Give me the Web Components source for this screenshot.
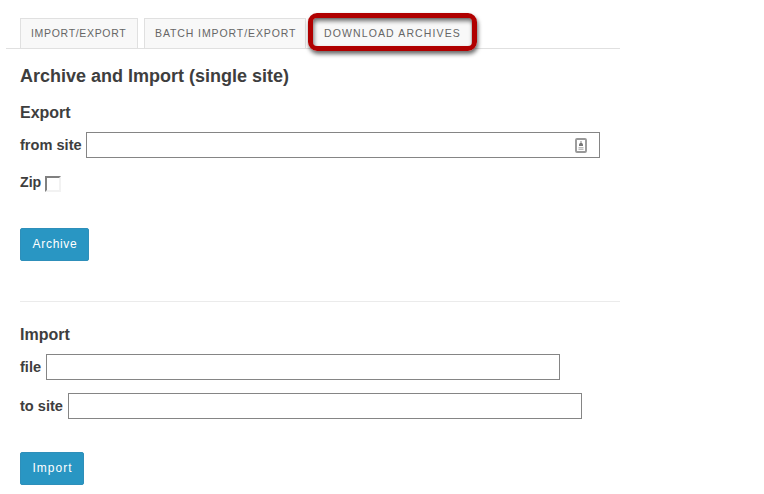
<!DOCTYPE html>
<html lang="en"><head><meta charset="utf-8"><title>Archive Tool</title>
<style>html,body{margin:0;background:#fff}body{font-family:"Liberation Sans",Arial,sans-serif;color:#3e3e3e;width:764px;height:494px;overflow:hidden}</style></head>
<body><archive-page></archive-page>
<script>
function define(name, html) {
  const template = document.createElement('template');
  template.innerHTML = html;
  customElements.define(name, class extends HTMLElement {
    constructor() {
      super();
      this.attachShadow({mode: 'open'}).append(template.content.cloneNode(true));
    }
  });
}
define('nav-tab', `<style>
:host{display:block;position:relative;box-sizing:border-box;height:30px;border:1px solid #e0e0e0;border-bottom:0;background:#f8f8f8;padding-left:10px;font-size:10.5px;line-height:29px;letter-spacing:var(--track);color:#666;white-space:nowrap}
.ring{display:none}
:host([highlighted]) .ring{display:block;position:absolute;left:-5px;top:-6px;width:169px;height:38px;box-sizing:border-box;border:5px solid #b00000;border-radius:9px;box-shadow:1px 3px 4px rgba(0,0,0,.6),inset 1px 3px 4px rgba(0,0,0,.55)}
</style><slot></slot><span class="ring"></span>`);
define('tab-bar', `<style>:host{display:flex;box-sizing:border-box;gap:6px;height:49px;width:614px;margin-left:6px;padding:18px 0 0 14px;border-bottom:1px solid #e0e0e0}</style><slot></slot>`);
define('form-field', `<style>
:host{display:flex;align-items:center;gap:4px;height:26px;font-size:14.6px;font-weight:bold}
label{width:var(--label);white-space:nowrap}
.box{box-sizing:border-box;width:514px;height:26px;border:1px solid #858585;display:flex;align-items:center;justify-content:flex-end;padding-right:12px}
</style><label><slot></slot></label><span class="box"><slot name="icon"></slot></span>`);
define('contact-icon', `<style>:host{display:block;width:12px;height:15px}svg{display:block}</style>
<svg width="12" height="15" viewBox="0 0 12 15"><rect x="1" y="1" width="10" height="13" rx="1" fill="#fff" stroke="#999" stroke-width="1.9"/><path d="M6 3v2" stroke="#aaa" stroke-width="1.5"/><path d="M4 8V6.3L5 5h2l1 1.3V8z" fill="#777"/><path d="M3.5 9.7h5M3.5 11.3h5" stroke="#bbb" stroke-width="1.2"/></svg>`);
define('check-option', `<style>
:host{display:flex;gap:4px;height:16px;font-size:14.2px;font-weight:bold;line-height:13px}
label{width:21px}i{box-sizing:border-box;width:16px;height:16px;border:2px solid #808080;border-top-color:#808080;border-right-color:#f2f2f2;border-bottom-color:#f2f2f2}
</style><label><slot></slot></label><i></i>`);
define('action-button', `<style>
:host{display:block}button{display:block;box-sizing:border-box;width:var(--w);height:33px;border:1px solid #2e8fba;border-radius:2px;background:#2996c3;color:#fff;font:12px "Liberation Sans",Arial,sans-serif;letter-spacing:var(--track,.7px);padding:0 0 1px 1px;line-height:30px}
</style><button><slot></slot></button>`);
define('archive-page', `<style>
:host{display:block}main{width:600px;padding-left:20px;display:flex;flex-direction:column}
h1,h2{margin:0;font-weight:bold}h1{font-size:18px;line-height:22px;margin-top:16px}
h2{font-size:16px;line-height:20px}
hr{width:600px;height:1px;border:0;background:#ebebeb;margin:40px 0 0}
</style>
<tab-bar><nav-tab style="width:118px;--track:.68px">IMPORT/EXPORT</nav-tab><nav-tab style="width:162px;--track:.9px">BATCH IMPORT/EXPORT</nav-tab><nav-tab style="width:160px;padding-left:11px;--track:1.12px" highlighted>DOWNLOAD ARCHIVES</nav-tab></tab-bar>
<main><h1>Archive and Import (single site)</h1>
<h2 style="margin-top:16px">Export</h2>
<form-field style="margin-top:9px;--label:62px">from site<contact-icon slot="icon"></contact-icon></form-field>
<check-option style="margin-top:18px">Zip</check-option>
<action-button style="margin-top:36px;--w:69px">Archive</action-button>
<hr>
<h2 style="margin-top:23px">Import</h2>
<form-field style="margin-top:9px;--label:22px">file</form-field>
<form-field style="margin-top:13px;--label:44px">to site</form-field>
<action-button style="margin-top:33px;--w:64px;--track:1px">Import</action-button></main>`);
</script></body></html>
